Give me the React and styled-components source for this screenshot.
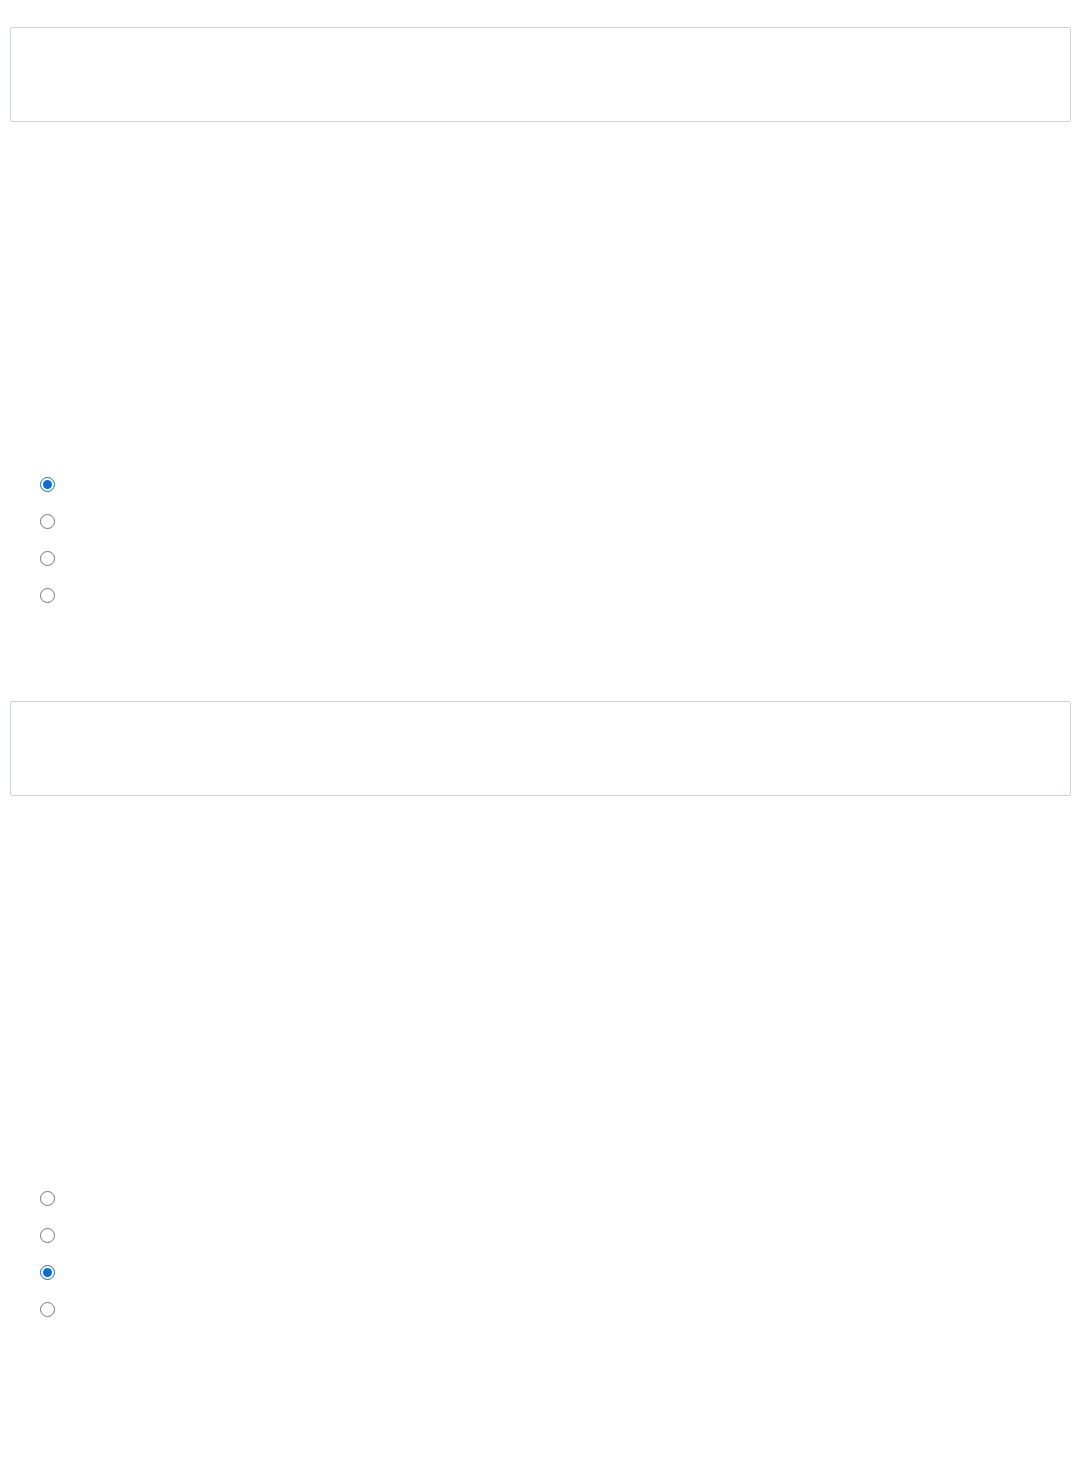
import React from 'react';
import styled, { createGlobalStyle } from 'styled-components';

const GlobalStyle = createGlobalStyle`
  html, body {
    margin: 0;
    padding: 0;
    background: #fff;
    font-family: "Liberation Sans", Arial, sans-serif;
  }
`;

const Page = styled.div`
  display: flex;
  flex-direction: column;
  padding: 27px 8px 0 10px;
`;

const Question = styled.section`
  display: flex;
  flex-direction: column;
  padding-bottom: ${(props) => props.$after}px;
`;

const AnswerBox = styled.div`
  box-sizing: border-box;
  height: 95px;
  border: 1px solid #cfd4db;
  border-radius: 2px;
  background: #fff;
`;

const Options = styled.div`
  display: flex;
  flex-direction: column;
  margin-top: ${(props) => props.$gap}px;
  padding-left: 30px;
`;

const Option = styled.label`
  display: flex;
  align-items: center;
  height: 37px;
  cursor: pointer;
`;

const Radio = styled.input`
  width: 15px;
  height: 15px;
  margin: 0;
  accent-color: #0b6fd1;
`;

function Choice({ name, options, picked, gap, after }) {
  return (
    <Question $after={after}>
      <AnswerBox />
      <Options $gap={gap}>
        {options.map((opt) => (
          <Option key={opt}>
            <Radio type="radio" name={name} value={opt} defaultChecked={opt === picked} />
          </Option>
        ))}
      </Options>
    </Question>
  );
}

export default function App() {
  const opts = ['a', 'b', 'c', 'd'];
  return (
    <>
      <GlobalStyle />
      <Page>
        <Choice name="q1" options={opts} picked="a" gap={344} after={87} />
        <Choice name="q2" options={opts} picked="c" gap={384} after={150} />
      </Page>
    </>
  );
}
